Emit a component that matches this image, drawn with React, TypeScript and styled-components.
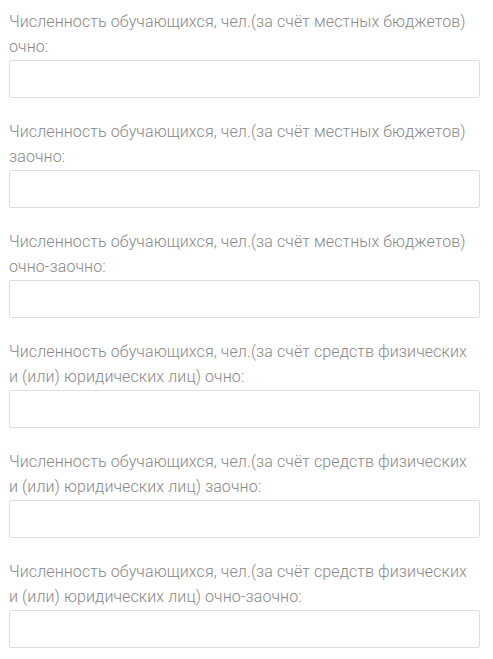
import styled, { createGlobalStyle } from "styled-components";

const GlobalStyle = createGlobalStyle`
  body {
    margin: 0;
    background: #ffffff;
    font-family: Roboto, "Noto Sans", sans-serif;
  }
`;

const Form = styled.div`
  display: flex;
  flex-direction: column;
  gap: 21px;
  padding: 9px 13px 0 9px;
`;

const Field = styled.div`
  display: flex;
  flex-direction: column;
`;

const Label = styled.label`
  color: #888888;
  font-size: 16px;
  font-weight: 300;
  line-height: 25px;
  letter-spacing: 0.1px;
  padding-right: 8px;
  margin-bottom: 1px;
`;

const Input = styled.input`
  box-sizing: border-box;
  width: 100%;
  height: 38px;
  border: 1px solid #dedede;
  border-radius: 2px;
  background: #fff;
  padding: 0 10px;
  font: 300 16px Roboto, sans-serif;
  color: #555;
  outline: none;
`;

const fields = [
  "Численность обучающихся, чел.(за счёт местных бюджетов) очно:",
  "Численность обучающихся, чел.(за счёт местных бюджетов) заочно:",
  "Численность обучающихся, чел.(за счёт местных бюджетов) очно-заочно:",
  "Численность обучающихся, чел.(за счёт средств физических и (или) юридических лиц) очно:",
  "Численность обучающихся, чел.(за счёт средств физических и (или) юридических лиц) заочно:",
  "Численность обучающихся, чел.(за счёт средств физических и (или) юридических лиц) очно-заочно:",
];

export default function App() {
  return (
    <>
      <GlobalStyle />
      <Form>
        {fields.map((text, i) => (
          <Field key={i}>
            <Label htmlFor={`f${i}`}>{text}</Label>
            <Input id={`f${i}`} type="text" />
          </Field>
        ))}
      </Form>
    </>
  );
}
